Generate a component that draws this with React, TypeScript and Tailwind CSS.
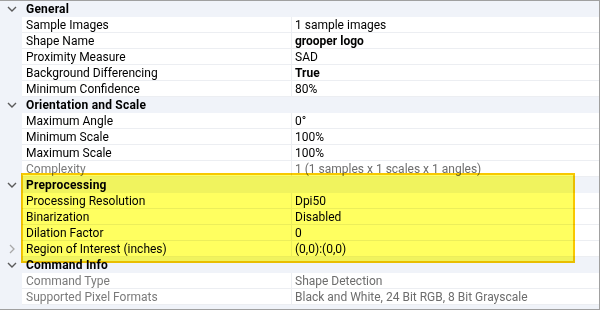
import React from "react";

type Row = { label: string; value: string; bold?: boolean; disabled?: boolean; expandable?: boolean };
type Section = { title: string; rows: Row[] };

const sections: Section[] = [
  {
    title: "General",
    rows: [
      { label: "Sample Images", value: "1 sample images" },
      { label: "Shape Name", value: "grooper logo", bold: true },
      { label: "Proximity Measure", value: "SAD" },
      { label: "Background Differencing", value: "True", bold: true },
      { label: "Minimum Confidence", value: "80%" },
    ],
  },
  {
    title: "Orientation and Scale",
    rows: [
      { label: "Maximum Angle", value: "0°" },
      { label: "Minimum Scale", value: "100%" },
      { label: "Maximum Scale", value: "100%" },
      { label: "Complexity", value: "1 (1 samples x 1 scales x 1 angles)", disabled: true },
    ],
  },
  {
    title: "Preprocessing",
    rows: [
      { label: "Processing Resolution", value: "Dpi50" },
      { label: "Binarization", value: "Disabled" },
      { label: "Dilation Factor", value: "0" },
      { label: "Region of Interest (inches)", value: "(0,0):(0,0)", expandable: true },
    ],
  },
  {
    title: "Command Info",
    rows: [
      { label: "Command Type", value: "Shape Detection", disabled: true },
      { label: "Supported Pixel Formats", value: "Black and White, 24 Bit RGB, 8 Bit Grayscale", disabled: true },
    ],
  },
];

function ChevronDown() {
  return (
    <svg width="10" height="6" viewBox="0 0 10 6" className="block">
      <path d="M1 1 L5 5 L9 1" fill="none" stroke="#5a5a5a" strokeWidth="1.4" />
    </svg>
  );
}

function ChevronRight() {
  return (
    <svg width="6" height="10" viewBox="0 0 6 10" className="block">
      <path d="M1 1 L5 5 L1 9" fill="none" stroke="#a8a8a8" strokeWidth="1.3" />
    </svg>
  );
}

export default function App() {
  return (
    <div
      className="w-[600px] h-[312px] bg-white text-[12px] leading-none text-black"
      style={{ fontFamily: "Roboto, 'Liberation Sans', sans-serif" }}
    >
      <div className="relative isolate w-[600px] h-[310px] border-t border-r border-b border-[#a0a0a0] bg-[#f0f3f9] overflow-hidden">
        {sections.map((s) => (
          <div key={s.title} className="flex flex-col">
            <div className="flex h-4 items-center">
              <div className="w-[22px] flex justify-center pl-[2px]">
                <ChevronDown />
              </div>
              <div className="pl-1 font-bold tracking-[0.2px]">{s.title}</div>
            </div>
            {s.rows.map((r) => (
              <div key={r.label} className="flex h-4">
                <div className="w-[22px] flex items-center justify-center pl-[2px]">
                  {r.expandable ? <ChevronRight /> : null}
                </div>
                <div className="flex flex-1 bg-white border-b border-[#eceef2]">
                  <div
                    className={`w-[270px] border-r border-[#eceef2] pl-1 pt-px flex items-center ${
                      r.disabled ? "text-[#7a7a7a]" : ""
                    }`}
                  >
                    {r.label}
                  </div>
                  <div
                    className={`flex-1 pl-[3px] pt-px flex items-center ${r.bold ? "font-bold" : ""} ${
                      r.disabled ? "text-[#6d6d6d]" : ""
                    }`}
                  >
                    {r.value}
                  </div>
                </div>
              </div>
            ))}
          </div>
        ))}
        <div className="absolute left-[21px] top-[172px] w-[554px] h-[90px] border-2 border-[#f8c800] bg-[#ffff60] mix-blend-multiply" />
      </div>
    </div>
  );
}
